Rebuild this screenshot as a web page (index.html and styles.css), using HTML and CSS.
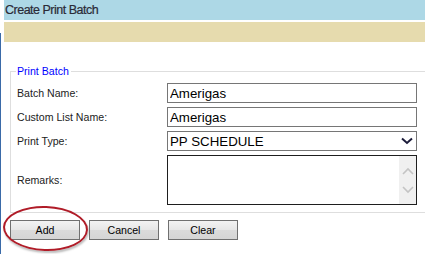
FILE: index.html
```html
<!DOCTYPE html>
<html lang="en">
<head>
    <meta charset="UTF-8">
    <title>Create Print Batch</title>
    <link rel="stylesheet" href="styles.css">
</head>
<body>
<div class="page">
    <div class="title-bar">Create Print Batch</div>
    <div class="message-bar"></div>

    <div class="content">
        <fieldset class="batch-box">
            <legend>Print Batch</legend>
            <div class="form-grid">
                <label for="batchName">Batch Name:</label>
                <input type="text" id="batchName" class="input-field" value="Amerigas">

                <label for="listName">Custom List Name:</label>
                <input type="text" id="listName" class="input-field" value="Amerigas">

                <label for="printType">Print Type:</label>
                <div class="select-box">
                    <select id="printType" class="select-field">
                        <option>PP SCHEDULE</option>
                    </select>
                    <svg class="select-arrow" width="12" height="8" viewBox="0 0 12 8">
                        <path d="M1 1.5 L6 6 L11 1.5" fill="none" stroke="#1c1c3a" stroke-width="2"/>
                    </svg>
                </div>

                <label for="remarks">Remarks:</label>
                <div class="remarks-box">
                    <textarea id="remarks" class="remarks-field"></textarea>
                    <div class="scroll-track">
                        <svg width="12" height="8" viewBox="0 0 12 8">
                            <path d="M1 7 L6 2 L11 7" fill="none" stroke="#c4c4c4" stroke-width="1.6"/>
                        </svg>
                        <svg width="12" height="8" viewBox="0 0 12 8">
                            <path d="M1 1 L6 6 L11 1" fill="none" stroke="#c4c4c4" stroke-width="1.6"/>
                        </svg>
                    </div>
                </div>
            </div>
        </fieldset>

        <div class="button-row">
            <button type="button" class="form-btn">Add</button>
            <button type="button" class="form-btn">Cancel</button>
            <button type="button" class="form-btn">Clear</button>
        </div>
    </div>

    <!-- annotation drawn over the screen -->
    <div class="highlight-ring"></div>
</div>
</body>
</html>
```

FILE: styles.css
```css
body {
    margin: 0;
    font-family: "Liberation Sans", Arial, sans-serif;
    font-size: 10.6px;
    color: #222;
    background: #fff;
}
.page {
    position: relative;
    width: 425px;
    height: 254px;
    overflow: hidden;
    padding-left: 4px;
    box-sizing: border-box;
}
.page::before {
    content: "";
    position: absolute;
    left: 0;
    top: 33px;
    bottom: 0;
    width: 1px;
    background: #3a6aa8;
}
.title-bar {
    height: 20px;
    line-height: 20px;
    padding-left: 1px;
    background-color: #add8e6;
    color: #2a2a36;
    font-size: 12.5px;
    letter-spacing: -0.5px;
    -webkit-text-stroke: 0.2px #2a2a36;
}
.message-bar {
    height: 20px;
    margin-top: 2px;
    background-color: #e6dbae;
}
.content {
    padding: 23px 0 0 6px;
}
.batch-box {
    margin: 0;
    padding: 6px 6px 7px 6px;
    border: 1px solid #dedede;
    border-right: none;
}
.batch-box legend {
    padding: 0 2px 0 1px;
    margin-left: -1px;
    line-height: 12px;
    color: #0000ff;
}
.form-grid {
    display: grid;
    grid-template-columns: 150px 250px;
    row-gap: 4px;
    align-items: center;
}
.input-field {
    height: 20px;
    box-sizing: border-box;
    margin: 0;
    padding: 0 2px;
    border: 1px solid #767676;
    font-family: "Liberation Sans", Arial, sans-serif;
    font-size: 13.3px;
    color: #000;
}
.select-box {
    position: relative;
    height: 20px;
}
.select-field {
    appearance: none;
    width: 100%;
    height: 20px;
    box-sizing: border-box;
    margin: 0;
    padding: 0 2px;
    border: 1px solid #767676;
    border-radius: 0;
    background: #fff;
    font-family: "Liberation Sans", Arial, sans-serif;
    font-size: 13.3px;
    color: #000;
}
.select-arrow {
    position: absolute;
    right: 4px;
    top: 6px;
}
.remarks-box {
    display: flex;
    height: 50px;
    box-sizing: border-box;
    border: 1px solid #1e1e1e;
}
.remarks-field {
    flex: 1;
    margin: 0;
    border: none;
    resize: none;
    outline: none;
}
.scroll-track {
    width: 17px;
    display: flex;
    flex-direction: column;
    justify-content: space-around;
    align-items: center;
    padding: 5px 0;
    background: #f0f0f0;
}
.button-row {
    display: flex;
    gap: 9px;
    margin-top: 7px;
}
.form-btn {
    width: 70px;
    height: 20px;
    margin: 0;
    padding: 0;
    border: 1px solid #707070;
    background: linear-gradient(#f3f3f3, #e6e6e6 50%, #dbdbdb 51%, #d5d5d5);
    font-family: "Liberation Sans", Arial, sans-serif;
    font-size: 10.6px;
    color: #000;
}
.highlight-ring {
    position: absolute;
    left: 3px;
    top: 206px;
    width: 85px;
    height: 45px;
    box-sizing: border-box;
    border: 2px solid #b01c28;
    border-radius: 50%;
    box-shadow: 1px 2px 2px rgba(0, 0, 0, 0.25);
    transform: rotate(2deg);
}
```
